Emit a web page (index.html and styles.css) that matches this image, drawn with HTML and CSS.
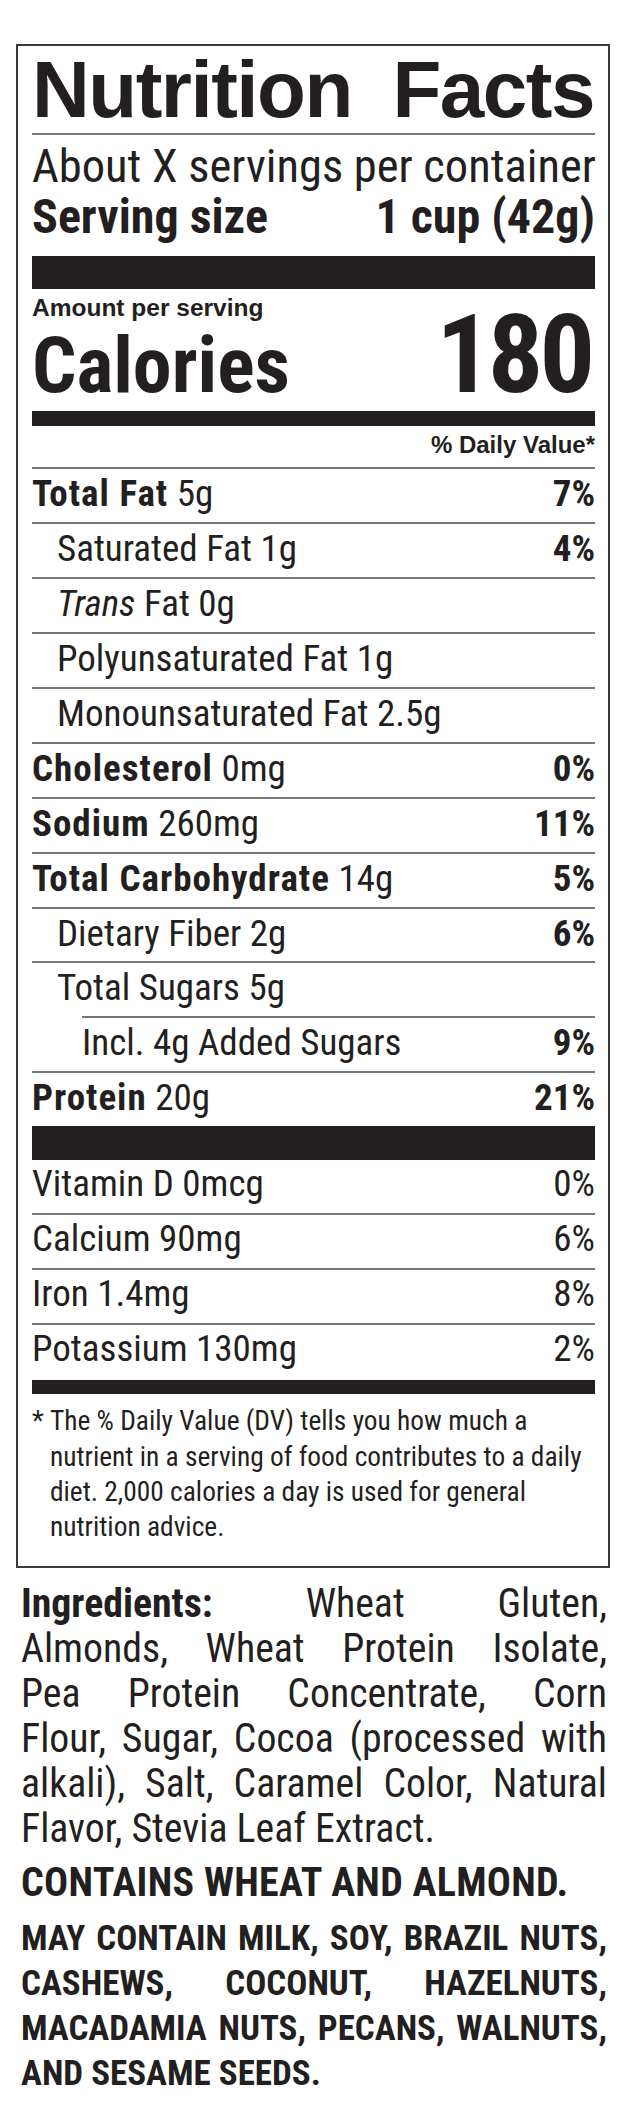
FILE: index.html
```html
<!DOCTYPE html>
<html lang="en">
<head>
<meta charset="utf-8">
<title>Nutrition Facts</title>
<link rel="stylesheet" href="styles.css">
</head>
<body>
<main class="page">
  <section class="label">
    <h1 class="title">Nutrition Facts</h1>
    <div class="servings">
      <p class="per-container">About X servings per container</p>
      <p class="serving-size"><span>Serving size</span><span>1 cup (42g)</span></p>
    </div>
    <div class="bar bar-top"></div>
    <div class="calories">
      <div class="cal-left">
        <p class="amount">Amount per serving</p>
        <p class="cal-label">Calories</p>
      </div>
      <p class="cal-value">180</p>
    </div>
    <div class="bar bar-mid"></div>
    <p class="dv-head">% Daily Value*</p>
    <ul class="nutrients">
      <li class="row"><span><b>Total Fat</b> 5g</span><b>7%</b></li>
      <li class="row sub"><span>Saturated Fat 1g</span><b>4%</b></li>
      <li class="row sub"><span><i>Trans</i> Fat 0g</span></li>
      <li class="row sub"><span>Polyunsaturated Fat 1g</span></li>
      <li class="row sub"><span>Monounsaturated Fat 2.5g</span></li>
      <li class="row"><span><b>Cholesterol</b> 0mg</span><b>0%</b></li>
      <li class="row"><span><b>Sodium</b> 260mg</span><b>11%</b></li>
      <li class="row"><span><b>Total Carbohydrate</b> 14g</span><b>5%</b></li>
      <li class="row sub"><span>Dietary Fiber 2g</span><b>6%</b></li>
      <li class="row sub no-rule"><span>Total Sugars 5g</span></li>
      <li class="row sub2"><span>Incl. 4g Added Sugars</span><b>9%</b></li>
      <li class="row last"><span><b>Protein</b> 20g</span><b>21%</b></li>
    </ul>
    <div class="bar bar-lower"></div>
    <ul class="vitamins">
      <li class="row"><span>Vitamin D 0mcg</span><span>0%</span></li>
      <li class="row"><span>Calcium 90mg</span><span>6%</span></li>
      <li class="row"><span>Iron 1.4mg</span><span>8%</span></li>
      <li class="row last"><span>Potassium 130mg</span><span>2%</span></li>
    </ul>
    <div class="bar bar-foot"></div>
    <div class="footnote">
      <span class="star">*</span>
      <p>The % Daily Value (DV) tells you how much a nutrient in a serving of food contributes to a daily diet. 2,000 calories a day is used for general nutrition advice.</p>
    </div>
  </section>

  <section class="ingredients">
    <p class="ingr">
      <span class="ln"><b>Ingredients:</b> Wheat Gluten,</span>
      <span class="ln">Almonds, Wheat Protein Isolate,</span>
      <span class="ln">Pea Protein Concentrate, Corn</span>
      <span class="ln">Flour, Sugar, Cocoa (processed with</span>
      <span class="ln">alkali), Salt, Caramel Color, Natural</span>
      <span class="ln end">Flavor, Stevia Leaf Extract.</span>
    </p>
    <p class="contains">CONTAINS WHEAT AND ALMOND.</p>
    <p class="may">
      <span class="ln">MAY CONTAIN MILK, SOY, BRAZIL NUTS,</span>
      <span class="ln">CASHEWS, COCONUT, HAZELNUTS,</span>
      <span class="ln">MACADAMIA NUTS, PECANS, WALNUTS,</span>
      <span class="ln end">AND SESAME SEEDS.</span>
    </p>
  </section>
</main>
</body>
</html>
```

FILE: styles.css
```css
* { box-sizing: border-box; }
html, body { margin: 0; padding: 0; background: #fff; }
body {
  width: 628px;
  color: #231f20;
  font-family: "Roboto Condensed", "Liberation Sans", Arial, sans-serif;
}
p, h1, ul { margin: 0; padding: 0; }
ul { list-style: none; }
b { font-weight: 700; }

.page { padding-top: 44px; }

.label {
  margin: 0 18px 0 16px;
  border: 2px solid #3a3a3a;
  padding: 0 13px 20.8px 14px;
}

.title {
  font-family: "Liberation Sans", Arial, sans-serif;
  font-weight: 700;
  font-size: 80px;
  line-height: 87px;
  letter-spacing: -1.5px;
  word-spacing: 20px;
  white-space: nowrap;
  border-bottom: 2px solid #777;
}

.servings { padding-top: 5.6px; }
.per-container {
  font-size: 46.5px;
  line-height: 51px;
  white-space: nowrap;
}
.serving-size {
  display: flex;
  justify-content: space-between;
  font-size: 48px;
  line-height: 49px;
  font-weight: 700;
}

.bar { background: #231f20; }
.bar-top { height: 33px; margin-top: 15.9px; }
.bar-mid { height: 15px; }
.bar-lower { height: 34px; }
.bar-foot { height: 14px; margin-top: 2px; }

.calories {
  display: flex;
  justify-content: space-between;
  align-items: flex-end;
  padding: 0 0 6.7px;
}
.amount {
  font-family: "Liberation Sans", Arial, sans-serif;
  font-weight: 700;
  font-size: 24.5px;
  line-height: 37.3px;
}
.cal-label {
  font-weight: 700;
  font-size: 78px;
  line-height: 78px;
}
.cal-value {
  font-weight: 700;
  font-size: 110px;
  line-height: 100px;
  letter-spacing: -4px;
  margin-right: 4px;
}

.dv-head {
  font-family: "Liberation Sans", Arial, sans-serif;
  font-weight: 700;
  font-size: 24px;
  line-height: 37px;
  padding-bottom: 4px;
  border-bottom: 2px solid #777;
  text-align: right;
}

.row {
  display: flex;
  justify-content: space-between;
  align-items: baseline;
  font-size: 37px;
  line-height: 50.5px;
  padding-bottom: 2.4px;
  border-bottom: 2px solid #777;
  white-space: nowrap;
}
.row span b { letter-spacing: 1px; }
.sub { padding-left: 25px; }
.no-rule { border-bottom: 0; }
.sub2 {
  padding-left: 50px;
  padding-top: 2px;
  background: linear-gradient(#777, #777) 50px 0 / calc(100% - 50px) 2px no-repeat;
}
.last { border-bottom: 0; }

.vitamins .row {
  line-height: 48.5px;
  padding-bottom: 4.5px;
}

.footnote {
  display: flex;
  font-size: 27.4px;
  line-height: 35.3px;
  padding-top: 10.2px;
}
.star { flex: none; width: 18px; }

.ingredients { padding: 12.8px 21px 0 21px; }
.ingr { font-size: 39.8px; line-height: 45px; }
.ln {
  display: block;
  text-align: justify;
  text-align-last: justify;
  white-space: nowrap;
}
.ln.end { text-align-last: left; }
.contains {
  font-weight: 700;
  font-size: 40px;
  line-height: 45px;
  letter-spacing: 0.3px;
  margin-top: 9px;
  white-space: nowrap;
}
.may {
  font-weight: 700;
  font-size: 35px;
  line-height: 45px;
  margin-top: 11.3px;
}
```
